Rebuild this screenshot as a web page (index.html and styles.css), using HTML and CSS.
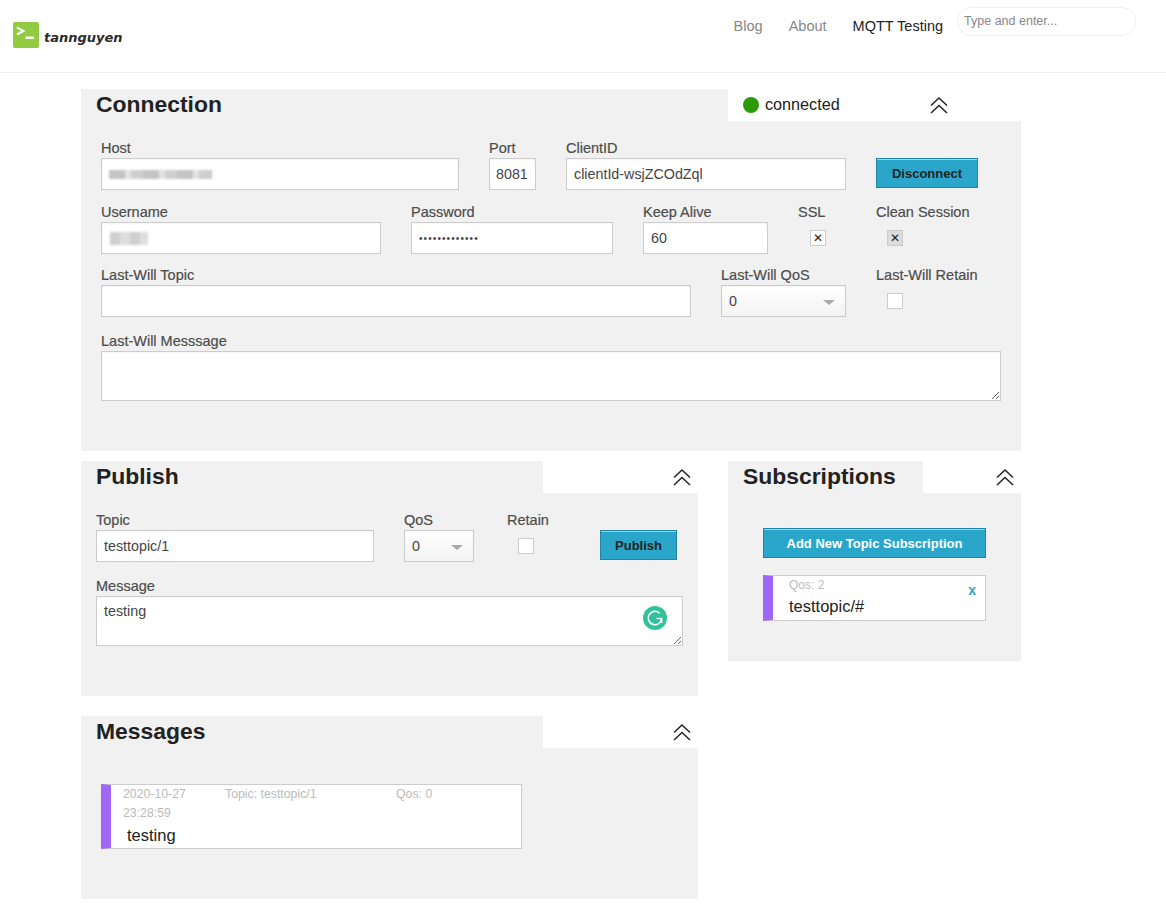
FILE: index.html
```html
<!DOCTYPE html>
<html lang="en">
<head>
    <meta charset="UTF-8">
    <title>MQTT Testing</title>
    <link rel="stylesheet" href="styles.css">
</head>
<body>
    <header class="site-header">
        <a class="brand" href="#">
            <svg class="brand-icon" viewBox="0 0 26 26" width="26" height="26">
                <rect width="26" height="26" rx="2" fill="#92cb41"/>
                <path d="M4 5.5 L10.5 9 L4 12.5" fill="none" stroke="#fff" stroke-width="2"/>
                <path d="M12.5 15.7 H21" fill="none" stroke="#fff" stroke-width="2.4"/>
            </svg>
            <span class="brand-name">tannguyen</span>
        </a>
        <nav class="site-nav">
            <a href="#">Blog</a>
            <a href="#">About</a>
            <a class="active" href="#">MQTT Testing</a>
        </nav>
        <input class="site-search" type="text" placeholder="Type and enter...">
    </header>

    <main class="page">
        <section class="panel panel-wide">
            <div class="panel-head">
                <h2 class="panel-title title-connection">Connection</h2>
                <div class="panel-side side-connection">
                    <span class="status-dot"></span>
                    <span class="status-text">connected</span>
                    <svg class="chevrons" viewBox="0 0 18 18" width="18" height="18"><path d="M1 9.5 L9 2 L17 9.5 M1 17 L9 9.5 L17 17" fill="none" stroke="#222" stroke-width="1.5"/></svg>
                </div>
            </div>
            <div class="panel-body body-connection">
                <div class="row">
                    <div class="field w-358">
                        <label>Host</label>
                        <div class="fake-input"><span class="blur-host"></span></div>
                    </div>
                    <div class="field w-47">
                        <label>Port</label>
                        <input class="input input-tight" type="text" value="8081">
                    </div>
                    <div class="field w-280">
                        <label>ClientID</label>
                        <input class="input" type="text" value="clientId-wsjZCOdZql">
                    </div>
                    <div class="field">
                        <label>&nbsp;</label>
                        <button class="btn btn-disconnect">Disconnect</button>
                    </div>
                </div>
                <div class="row row-2">
                    <div class="field w-280">
                        <label>Username</label>
                        <div class="fake-input"><span class="blur-user"></span></div>
                    </div>
                    <div class="field w-202">
                        <label>Password</label>
                        <input class="input input-pass" type="password" value="mqttpassword1">
                    </div>
                    <div class="field w-125">
                        <label>Keep Alive</label>
                        <input class="input" type="text" value="60">
                    </div>
                    <div class="field w-48">
                        <label>SSL</label>
                        <div class="check-wrap check-ssl"><input type="checkbox" checked></div>
                    </div>
                    <div class="field">
                        <label>Clean Session</label>
                        <div class="check-wrap check-clean"><input class="check-grey" type="checkbox" checked></div>
                    </div>
                </div>
                <div class="row row-3">
                    <div class="field w-590">
                        <label>Last-Will Topic</label>
                        <input class="input" type="text">
                    </div>
                    <div class="field w-125">
                        <label>Last-Will QoS</label>
                        <div class="select-wrap">
                            <select class="select"><option>0</option></select>
                        </div>
                    </div>
                    <div class="field">
                        <label>Last-Will Retain</label>
                        <div class="check-wrap check-clean"><input type="checkbox"></div>
                    </div>
                </div>
                <div class="row row-4">
                    <div class="field w-900">
                        <label>Last-Will Messsage</label>
                        <textarea class="textarea"></textarea>
                    </div>
                </div>
            </div>
        </section>

        <div class="column">
            <section class="panel">
                <div class="panel-head">
                    <h2 class="panel-title title-left">Publish</h2>
                    <div class="panel-side">
                        <svg class="chevrons" viewBox="0 0 18 18" width="18" height="18"><path d="M1 9.5 L9 2 L17 9.5 M1 17 L9 9.5 L17 17" fill="none" stroke="#222" stroke-width="1.5"/></svg>
                    </div>
                </div>
                <div class="panel-body body-publish">
                    <div class="row">
                        <div class="field w-278">
                            <label>Topic</label>
                            <input class="input" type="text" value="testtopic/1">
                        </div>
                        <div class="field w-73">
                            <label>QoS</label>
                            <div class="select-wrap select-small">
                                <select class="select"><option>0</option></select>
                            </div>
                        </div>
                        <div class="field w-63">
                            <label>Retain</label>
                            <div class="check-wrap check-retain"><input type="checkbox"></div>
                        </div>
                        <div class="field">
                            <label>&nbsp;</label>
                            <button class="btn btn-publish">Publish</button>
                        </div>
                    </div>
                    <div class="row row-msg">
                        <div class="field w-587 message-field">
                            <label>Message</label>
                            <textarea class="textarea">testing</textarea>
                            <svg class="grammarly" viewBox="0 0 24 24" width="24" height="24">
                                <circle cx="12" cy="12" r="12" fill="#31c29b"/>
                                <path d="M16.6 7.2 A6.7 6.7 0 1 0 18.6 12.5 H13.5 M18.6 12.5 V17" fill="none" stroke="#fff" stroke-width="1.6"/>
                            </svg>
                        </div>
                    </div>
                </div>
            </section>

            <section class="panel">
                <div class="panel-head">
                    <h2 class="panel-title title-left">Messages</h2>
                    <div class="panel-side">
                        <svg class="chevrons" viewBox="0 0 18 18" width="18" height="18"><path d="M1 9.5 L9 2 L17 9.5 M1 17 L9 9.5 L17 17" fill="none" stroke="#222" stroke-width="1.5"/></svg>
                    </div>
                </div>
                <div class="panel-body body-messages">
                    <div class="message">
                        <div class="message-meta">
                            <span class="meta-date">2020-10-27 23:28:59</span>
                            <span class="meta-topic">Topic: testtopic/1</span>
                            <span>Qos: 0</span>
                        </div>
                        <div class="message-text">testing</div>
                    </div>
                </div>
            </section>
        </div>

        <section class="panel panel-subs">
            <div class="panel-head">
                <h2 class="panel-title title-subs">Subscriptions</h2>
                <div class="panel-side">
                    <svg class="chevrons" viewBox="0 0 18 18" width="18" height="18"><path d="M1 9.5 L9 2 L17 9.5 M1 17 L9 9.5 L17 17" fill="none" stroke="#222" stroke-width="1.5"/></svg>
                </div>
            </div>
            <div class="panel-body body-subs">
                <button class="btn btn-add">Add New Topic Subscription</button>
                <div class="sub-item">
                    <div class="sub-qos">Qos: 2</div>
                    <div class="sub-topic">testtopic/#</div>
                    <a class="sub-close" href="#">x</a>
                </div>
            </div>
        </section>
    </main>
</body>
</html>
```

FILE: styles.css
```css
* {
    box-sizing: border-box;
}

body {
    margin: 0;
    background-color: #fff;
    color: #222;
    font-family: "Liberation Sans", Arial, sans-serif;
}

/* header */
.site-header {
    display: flex;
    height: 73px;
    border-bottom: 1px solid #eee;
    padding-left: 13px;
}

.brand {
    display: flex;
    align-items: center;
    gap: 5px;
    height: 26px;
    margin-top: 22px;
    text-decoration: none;
}

.brand-name {
    margin-top: 4px;
    color: #2b2b2b;
    font-family: "DejaVu Sans", sans-serif;
    font-size: 13px;
    font-weight: bold;
    font-style: italic;
}

.site-nav {
    display: flex;
    gap: 26px;
    margin-left: 611px;
    padding-top: 18px;
    font-size: 14.5px;
    line-height: 17px;
}

.site-nav a {
    color: #888;
    text-decoration: none;
}

.site-nav a.active {
    color: #222;
}

.site-search {
    width: 179px;
    height: 29px;
    margin: 7px 0 0 14px;
    padding: 0 6px 2px;
    border: 1px solid #f0f0f0;
    border-radius: 14px;
    font-family: inherit;
    font-size: 12.5px;
}

.site-search::placeholder {
    color: #888;
}

/* layout */
.page {
    display: grid;
    grid-template-columns: 617px 293px;
    column-gap: 30px;
    row-gap: 10px;
    align-items: start;
    width: 940px;
    margin: 16px 0 0 81px;
}

.panel-wide {
    grid-column: 1 / 3;
}

.column {
    display: flex;
    flex-direction: column;
    gap: 20px;
}

.panel-head {
    display: flex;
    height: 32px;
}

.panel-title {
    margin: 0;
    padding-left: 15px;
    background-color: #f1f1f1;
    font-size: 22.9px;
    line-height: 31px;
    font-weight: bold;
    color: #222;
}

.title-connection {
    width: 647px;
}

.title-left {
    width: 462px;
}

.title-subs {
    width: 195px;
}

.panel-side {
    display: flex;
    flex: 1;
    align-items: center;
    justify-content: flex-end;
    padding-right: 7px;
}

.side-connection {
    justify-content: flex-start;
    padding: 0 0 0 15px;
}

.side-connection .chevrons {
    margin-left: 90px;
}

.status-dot {
    width: 16px;
    height: 16px;
    border-radius: 50%;
    background-color: #2a9a0a;
}

.status-text {
    margin: -1px 0 0 6px;
    font-size: 16.2px;
}

.panel-body {
    background-color: #f1f1f1;
}

.body-connection {
    height: 330px;
    padding: 19px 20px 0;
}

.body-publish {
    height: 203px;
    padding: 19px 15px 0;
}

.body-messages {
    height: 151px;
    padding: 36px 20px 0;
}

.body-subs {
    height: 168px;
    padding: 35px 35px 0;
}

/* form */
.row {
    display: flex;
    gap: 30px;
}

.row-2 {
    margin-top: 14px;
}

.row-3 {
    margin-top: 13px;
}

.row-4 {
    margin-top: 16px;
}

.row-msg {
    margin-top: 16px;
}

.field label {
    display: block;
    height: 18px;
    color: #4d4d4d;
    font-size: 14.5px;
    line-height: 17px;
    -webkit-text-stroke: 0.2px #4d4d4d;
}

.w-358 { width: 358px; }
.w-47 { width: 47px; }
.w-280 { width: 280px; }
.w-202 { width: 202px; }
.w-125 { width: 125px; }
.w-48 { width: 48px; }
.w-590 { width: 590px; }
.w-900 { width: 900px; }
.w-278 { width: 278px; }
.w-73 { width: 73px; }
.w-63 { width: 63px; }
.w-587 { width: 587px; }

.input,
.fake-input,
.select,
.textarea {
    display: block;
    width: 100%;
    height: 32px;
    padding: 0 7px;
    border: 1px solid #ccc;
    border-radius: 0;
    background-color: #fff;
    color: #444;
    font-family: inherit;
    font-size: 14.3px;
    box-shadow: inset 0 1px 2px rgba(0, 0, 0, 0.04);
}

.input-tight {
    padding: 0 6px;
}

.input-pass {
    font-size: 10px;
    letter-spacing: 1.1px;
}

.fake-input {
    display: flex;
    align-items: center;
}

.blur-host {
    width: 103px;
    height: 9px;
    background: repeating-linear-gradient(90deg, #c4c4c4 0 16px, #e2e2e2 16px 22px, #cfcfcf 22px 34px);
    filter: blur(1.2px);
}

.blur-user {
    width: 38px;
    height: 13px;
    margin-left: 1px;
    background: repeating-linear-gradient(90deg, #cfcfcf 0 10px, #dedede 10px 20px);
    filter: blur(1.2px);
}

.textarea {
    height: 50px;
    padding: 6px 7px;
    resize: vertical;
}

.message-field {
    position: relative;
}

.grammarly {
    position: absolute;
    right: 16px;
    top: 28px;
}

.select-wrap {
    position: relative;
}

.select-small {
    width: 70px;
}

.select-wrap::after {
    content: "";
    position: absolute;
    right: 11px;
    top: 15px;
    border-top: 5px solid #aaa;
    border-left: 6px solid transparent;
    border-right: 6px solid transparent;
}

.select {
    appearance: none;
    background: linear-gradient(#fff, #f3f3f3);
}

.check-wrap {
    display: flex;
    height: 32px;
    align-items: center;
}

.check-ssl {
    padding-left: 12px;
}

.check-clean {
    padding-left: 11px;
}

.check-retain {
    padding-left: 11px;
}

.check-wrap input {
    appearance: none;
    display: grid;
    place-items: center;
    width: 16px;
    height: 16px;
    margin: 0;
    border: 1px solid #ccc;
    background-color: #fff;
}

.check-wrap input:checked::after {
    content: "\2715";
    color: #222;
    font-family: "DejaVu Sans", sans-serif;
    font-size: 12px;
    line-height: 1;
}

.check-wrap input.check-grey {
    background-color: #dcdcdc;
}

/* buttons */
.btn {
    display: block;
    height: 30px;
    border: 1px solid #2284a1;
    background-color: #2ba6cb;
    box-shadow: inset 0 1px 0 rgba(255, 255, 255, 0.5);
    color: #222;
    font-family: inherit;
    font-size: 13px;
    font-weight: bold;
    padding: 0;
}

.btn-disconnect {
    width: 102px;
}

.btn-publish {
    width: 77px;
}

.btn-add {
    width: 223px;
    color: #fff;
}

/* subscriptions */
.sub-item {
    position: relative;
    width: 223px;
    height: 46px;
    margin-top: 17px;
    padding: 1px 0 0 16px;
    border: 1px solid #ccc;
    border-left: 10px solid #9f66f7;
    background-color: #fff;
}

.sub-qos {
    height: 18px;
    color: #bbb;
    font-size: 12px;
    line-height: 16px;
}

.sub-topic {
    margin-top: 1px;
    font-size: 16.5px;
    line-height: 20px;
}

.sub-close {
    position: absolute;
    right: 9px;
    top: 6px;
    color: #2ba6cb;
    font-size: 14px;
    font-weight: bold;
    text-decoration: none;
}

/* messages */
.message {
    width: 421px;
    height: 65px;
    padding-left: 12px;
    border: 1px solid #ccc;
    border-left: 10px solid #9f66f7;
    background-color: #fff;
}

.message-meta {
    display: flex;
    color: #bbb;
    font-size: 12.3px;
    line-height: 19px;
}

.meta-date {
    width: 102px;
}

.meta-topic {
    width: 171px;
}

.message-text {
    margin: 2px 0 0 4px;
    font-size: 16.5px;
    line-height: 20px;
}
```
